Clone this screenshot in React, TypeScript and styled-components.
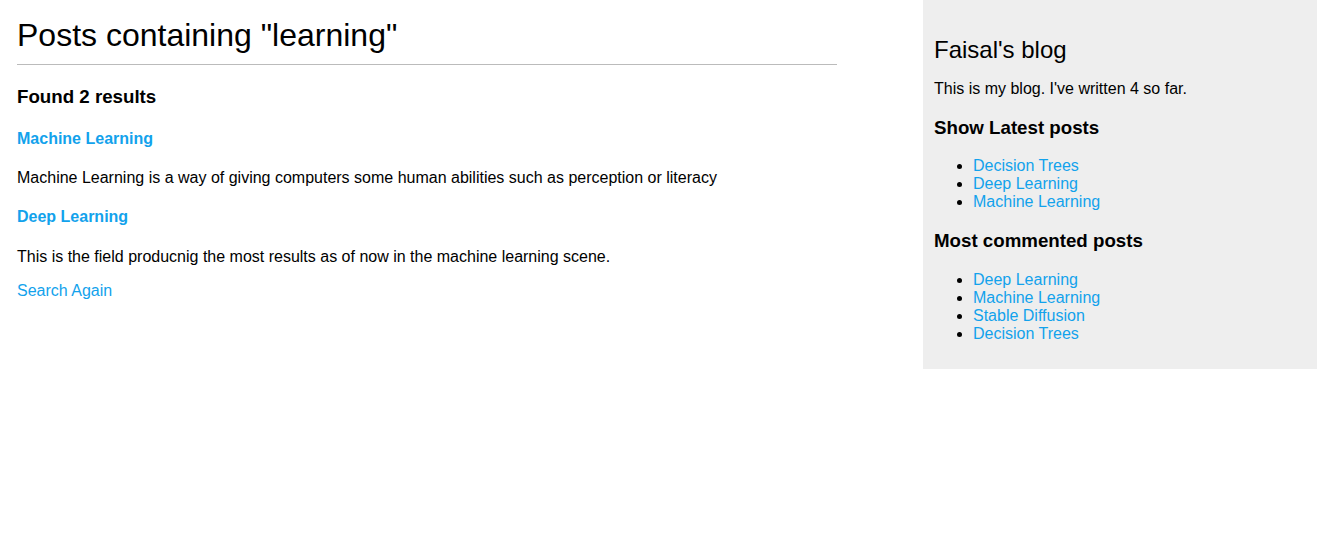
import React from "react";
import styled, { createGlobalStyle } from "styled-components";

const GlobalStyle = createGlobalStyle`
  html, body {
    margin: 0;
    padding: 0;
    background: #ffffff;
  }
  body {
    font-family: "Liberation Sans", Arial, Helvetica, sans-serif;
    font-size: 16px;
    color: #000000;
  }
`;

const Page = styled.div`
  display: flex;
  justify-content: space-between;
  align-items: flex-start;
  width: 100%;
`;

const Content = styled.main`
  width: 820px;
  margin-left: 17px;
`;

const Title = styled.h1`
  font-size: 32px;
  font-weight: normal;
  margin: 17px 0 21.44px;
  padding: 0 0 10px 0;
  border-bottom: 1px solid #bbbbbb;
`;

const SectionHeading = styled.h3`
  font-size: 18.72px;
  font-weight: bold;
  margin: 18.72px 0;
`;

const ResultTitle = styled.h4`
  font-size: 16px;
  font-weight: bold;
  margin: 21.28px 0;
`;

const Paragraph = styled.p`
  font-size: 16px;
  margin: 16px 0;
`;

const Link = styled.a`
  color: #12a2ec;
  text-decoration: none;
`;

const Sidebar = styled.aside`
  box-sizing: border-box;
  width: 394px;
  padding: 10px 10px 10px 11px;
  background: #eeeeee;
`;

const BlogName = styled.h2`
  font-size: 24px;
  font-weight: normal;
  margin: 26px 0 0;
`;

const PostList = styled.ul`
  margin: 16px 0;
  padding-left: 39px;
  list-style: disc;
`;

const PostItem = styled.li`
  line-height: normal;
`;

const results = [
  {
    title: "Machine Learning",
    body: "Machine Learning is a way of giving computers some human abilities such as perception or literacy",
  },
  {
    title: "Deep Learning",
    body: "This is the field producnig the most results as of now in the machine learning scene.",
  },
];

const latest = ["Decision Trees", "Deep Learning", "Machine Learning"];
const commented = ["Deep Learning", "Machine Learning", "Stable Diffusion", "Decision Trees"];

export default function App() {
  return (
    <>
      <GlobalStyle />
      <Page>
        <Content>
          <Title>Posts containing "learning"</Title>
          <SectionHeading>Found 2 results</SectionHeading>
          {results.map((r) => (
            <React.Fragment key={r.title}>
              <ResultTitle>
                <Link href="#">{r.title}</Link>
              </ResultTitle>
              <Paragraph>{r.body}</Paragraph>
            </React.Fragment>
          ))}
          <Paragraph>
            <Link href="#">Search Again</Link>
          </Paragraph>
        </Content>
        <Sidebar>
          <BlogName>Faisal's blog</BlogName>
          <Paragraph>This is my blog. I've written 4 so far.</Paragraph>
          <SectionHeading>Show Latest posts</SectionHeading>
          <PostList>
            {latest.map((p) => (
              <PostItem key={p}>
                <Link href="#">{p}</Link>
              </PostItem>
            ))}
          </PostList>
          <SectionHeading>Most commented posts</SectionHeading>
          <PostList>
            {commented.map((p) => (
              <PostItem key={p}>
                <Link href="#">{p}</Link>
              </PostItem>
            ))}
          </PostList>
        </Sidebar>
      </Page>
    </>
  );
}
